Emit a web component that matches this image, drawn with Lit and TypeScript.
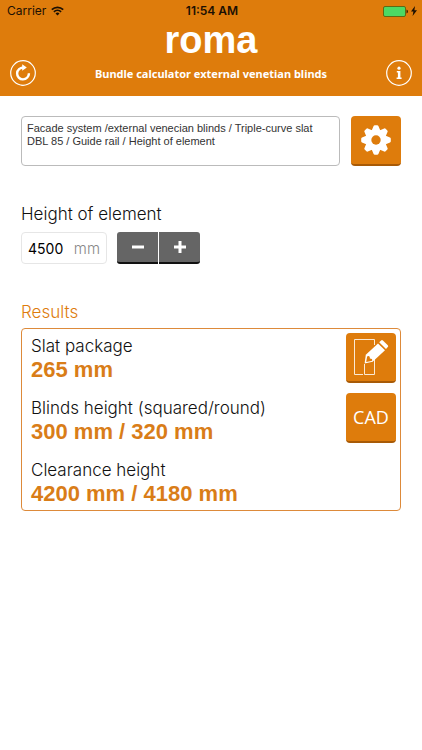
import { LitElement, html, css, svg } from "lit";
import { customElement, state } from "lit/decorators.js";

const TEETH = [0, 45, 90, 135, 180, 225, 270, 315];

@customElement("app-root")
export class AppRoot extends LitElement {
  @state() private elementHeight = 4500;

  private results = [
    { label: "Slat package", value: "265 mm" },
    { label: "Blinds height (squared/round)", value: "300 mm / 320 mm" },
    { label: "Clearance height", value: "4200 mm / 4180 mm" },
  ];

  static styles = css`
    :host {
      display: block;
      min-height: 100vh;
      background: #fff;
      color: #111;
      font-family: Inter, "Liberation Sans", sans-serif;
      font-weight: 300;
    }
    * { box-sizing: border-box; }
    svg { display: block; }
    button { font: inherit; border: 0; padding: 0; margin: 0; cursor: pointer; }
    header { background: #de7c0c; color: #fff; padding-bottom: 8px; }
    .status {
      display: grid;
      grid-template-columns: 1fr auto 1fr;
      align-items: center;
      height: 22px;
      padding: 0 5px 0 7px;
      color: #1c1003;
      font-size: 12px;
      font-weight: 400;
      line-height: 14px;
    }
    .carrier { display: flex; align-items: center; gap: 5px; }
    .clock { font-weight: 600; }
    .power { display: flex; align-items: center; justify-content: flex-end; gap: 3px; }
    .logo {
      height: 36px;
      line-height: 36px;
      text-align: center;
      font-family: "Liberation Sans", sans-serif;
      font-size: 38px;
      font-weight: 700;
    }
    .bar { display: flex; align-items: center; justify-content: space-between; height: 30px; padding: 0 10px; }
    .bar h1 { margin: 0; font-family: "Noto Sans", sans-serif; font-size: 11px; font-weight: 700; }
    .round { width: 26px; height: 26px; background: none; color: #fff; }
    main { padding: 20px 21px; }
    .summary { display: flex; gap: 11px; }
    .summary textarea {
      flex: 1;
      min-width: 0;
      height: 50px;
      padding: 5px;
      border: 1px solid #bbb;
      border-radius: 4px;
      background: #fff;
      color: #333;
      font-family: "Liberation Sans", sans-serif;
      font-size: 11px;
      line-height: 13px;
      resize: none;
      overflow: hidden;
      outline: none;
    }
    .tile {
      display: grid;
      place-items: center;
      flex: none;
      width: 50px;
      height: 50px;
      border-radius: 4px;
      border-bottom: 2px solid #a85a06;
      background: #de7c0c;
      color: #fff;
    }
    .cad { font-family: "Open Sans", sans-serif; font-size: 18px; font-weight: 400; }
    .caption { display: block; margin-top: 36px; font-size: 17px; line-height: 24px; }
    .entry { display: flex; gap: 10px; margin-top: 6px; }
    .field {
      display: flex;
      align-items: center;
      width: 86px;
      height: 32px;
      padding: 0 6px;
      border: 1px solid #e6e6e6;
      border-radius: 4px;
      color: #888;
      font-size: 15px;
    }
    .field input {
      flex: 1;
      min-width: 0;
      padding: 0;
      border: 0;
      outline: none;
      background: none;
      color: #000;
      font: inherit;
      font-size: 14px;
      font-weight: 400;
    }
    .stepper { display: flex; gap: 1px; }
    .stepper button {
      display: grid;
      place-items: center;
      width: 41px;
      height: 32px;
      background: #656565;
      border-bottom: 2px solid #111;
      color: #fff;
    }
    .stepper button:first-child { border-radius: 3px 0 0 3px; }
    .stepper button:last-child { border-radius: 0 3px 3px 0; }
    h2 { margin: 36px 0 4px; color: #de7c0c; font-size: 17px; font-weight: 300; line-height: 24px; }
    .results {
      display: flex;
      justify-content: space-between;
      padding: 4px 4px 5px 9px;
      border: 1px solid #dd8a3a;
      border-radius: 4px;
    }
    dl { display: grid; gap: 16px; margin: 2px 0 0; }
    dt { font-size: 17px; line-height: 23px; }
    dd {
      margin: 0;
      color: #d97d18;
      font-family: "Liberation Sans", sans-serif;
      font-size: 22px;
      font-weight: 700;
      line-height: 23px;
    }
    .actions { display: grid; gap: 10px; align-content: start; }
  `;

  private step(amount: number) {
    this.elementHeight = Math.max(0, this.elementHeight + amount);
  }

  render() {
    return html`
      <header>
        <div class="status">
          <span class="carrier">Carrier
            <svg width="13" height="10" viewBox="0 0 13 10" fill="none" stroke="#1c1003" stroke-width="1.7">
              <path d="M.8 3.6a8.2 8.2 0 0 1 11.4 0M2.9 5.9a5.2 5.2 0 0 1 7.2 0" />
              <path d="M6.5 9.6 4.5 7.5a2.9 2.9 0 0 1 4 0z" fill="#1c1003" stroke="none" />
            </svg>
          </span>
          <span class="clock">11:54 AM</span>
          <span class="power">
            <svg width="25" height="11" viewBox="0 0 25 11">
              <rect x=".5" y=".5" width="22" height="10" rx="1.5" fill="#4cd964" stroke="#5e6a14" />
              <path d="M23.5 3.5q1.5.4 1.5 2t-1.5 2z" fill="#3a2003" />
            </svg>
            <svg width="6" height="10" viewBox="0 0 6 10"><path d="M4 0 0 5.6h2.4L1.6 10 6 4.2H3.4z" fill="#1c1003" /></svg>
          </span>
        </div>
        <div class="logo">roma</div>
        <div class="bar">
          <button class="round" aria-label="Reset">
            <svg width="26" height="26" viewBox="0 0 26 26" fill="none" stroke="#fff">
              <circle cx="13" cy="13" r="12.3" stroke-width="1.2" />
              <path d="M13.5 7.6a5.9 5.9 0 1 0 5.4 5.6" stroke-width="2.4" />
              <path d="M12.2 4.2v6.6l4.6-3.3z" fill="#fff" stroke="none" />
            </svg>
          </button>
          <h1>Bundle calculator external venetian blinds</h1>
          <button class="round" aria-label="Information">
            <svg width="26" height="26" viewBox="0 0 26 26" fill="#fff">
              <circle cx="13" cy="13" r="12.3" fill="none" stroke="#fff" stroke-width="1.2" />
              <circle cx="13" cy="8.2" r="1.6" />
              <path d="M10.8 11h3.6v6.6h1.2V19h-5v-1.4h1.3v-5.2h-1.1z" />
            </svg>
          </button>
        </div>
      </header>
      <main>
        <div class="summary">
          <textarea readonly aria-label="Configuration" .value=${"Facade system /external venecian blinds / Triple-curve slat\nDBL 85 / Guide rail / Height of element"}></textarea>
          <button class="tile" aria-label="Settings">
            <svg width="30" height="30" viewBox="-15 -15 30 30">
              <g fill="#fff">
                ${TEETH.map((a) => svg`<path d="M-4.4-9.2-2.4-14Q-2.1-14.8-1.2-14.8H1.2Q2.1-14.8 2.4-14L4.4-9.2z" transform="rotate(${a})" />`)}
                <circle r="10.6" />
              </g>
              <circle r="4.7" fill="#de7c0c" />
            </svg>
          </button>
        </div>

        <label class="caption" for="height">Height of element</label>
        <div class="entry">
          <div class="field">
            <input id="height" inputmode="numeric" .value=${String(this.elementHeight)} />
            <span>mm</span>
          </div>
          <div class="stepper">
            <button aria-label="Decrease" @click=${() => this.step(-10)}>
              <svg width="14" height="14" viewBox="0 0 14 14"><path d="M1 7h12" stroke="#fff" stroke-width="3" /></svg>
            </button>
            <button aria-label="Increase" @click=${() => this.step(10)}>
              <svg width="14" height="14" viewBox="0 0 14 14"><path d="M1 7h12M7 1v12" stroke="#fff" stroke-width="3" /></svg>
            </button>
          </div>
        </div>

        <h2>Results</h2>
        <section class="results">
          <dl>
            ${this.results.map((r) => html`<div><dt>${r.label}</dt><dd>${r.value}</dd></div>`)}
          </dl>
          <div class="actions">
            <button class="tile" aria-label="Edit drawing">
              <svg width="36" height="40" viewBox="0 0 36 40" fill="none" stroke="#fbe9d3">
                <path d="M21.5 8V2.5h-20v35h8.5M11.5 27v10.5h10V22" />
                <path d="M11.6 26.4l1.2-8.6L25 6.4l7 6.8L19.6 24.8z" fill="#fff" stroke="none" />
                <path d="M26.2 5.2l1.9-1.8q.9-.8 1.8 0l4.9 4.8q.9.9 0 1.8L33 12z" fill="#fff" stroke="none" />
                <path d="M13.2 24.9l.9-5.4q1.4-1 2.6.2l.2 1.8 2 .4q1 1.2-.3 2.1z" fill="#de7c0c" stroke="none" />
              </svg>
            </button>
            <button class="tile cad">CAD</button>
          </div>
        </section>
      </main>
    `;
  }
}
